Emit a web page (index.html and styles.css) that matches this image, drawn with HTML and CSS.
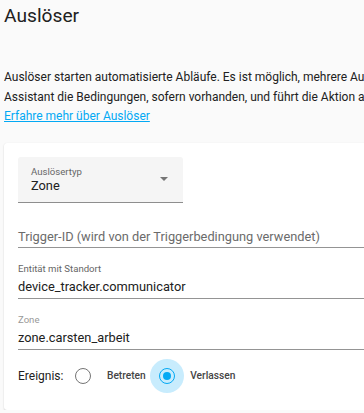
FILE: index.html
```html
<!DOCTYPE html>
<html lang="de">
<head>
  <meta charset="UTF-8">
  <meta name="viewport" content="width=device-width, initial-scale=1.0">
  <title>Auslöser</title>
  <link rel="stylesheet" href="styles.css">
</head>
<body>
  <div class="page">
    <h1 class="page-title">Auslöser</h1>
    <p class="intro">
      Auslöser starten automatisierte Abläufe. Es ist möglich, mehrere Auslöser für dieselbe Regel anzugeben. Sobald ein Auslöser startet, prüft Home<br>
      Assistant die Bedingungen, sofern vorhanden, und führt die Aktion aus.<br>
      <a href="#" class="intro-link">Erfahre mehr über Auslöser</a>
    </p>

    <div class="card">
      <div class="select">
        <div class="select-text">
          <div class="field-label">Auslösertyp</div>
          <div class="field-value">Zone</div>
        </div>
        <span class="select-arrow"></span>
      </div>

      <div class="field field-empty">
        <div class="field-placeholder">Trigger-ID (wird von der Triggerbedingung verwendet)</div>
      </div>

      <div class="field">
        <div class="field-label">Entität mit Standort</div>
        <div class="field-value">device_tracker.communicator</div>
      </div>

      <div class="field">
        <div class="field-label field-label-light">Zone</div>
        <div class="field-value">zone.carsten_arbeit</div>
      </div>

      <div class="event-row">
        <span class="event-label">Ereignis:</span>
        <label class="radio-option">
          <span class="radio"><span class="radio-ring"></span></span>
          <span class="radio-text">Betreten</span>
        </label>
        <label class="radio-option">
          <span class="radio checked"><span class="radio-ring"></span></span>
          <span class="radio-text">Verlassen</span>
        </label>
      </div>
    </div>
  </div>
</body>
</html>
```

FILE: styles.css
```css
:root {
  --primary: #03a9f4;
  --text: #212121;
  --secondary: #666666;
  --line: rgba(0, 0, 0, 0.42);
}

* {
  margin: 0;
  padding: 0;
  box-sizing: border-box;
}

body {
  font-family: Roboto, "Noto Sans", sans-serif;
  background-color: #fafafa;
  color: var(--text);
  overflow: hidden;
}

.page {
  width: 720px;
  padding-left: 4px;
}

.page-title {
  font-size: 19.2px;
  font-weight: 400;
  line-height: 24px;
  padding-top: 4px;
}

.intro {
  margin-top: 40px;
  font-size: 12px;
  line-height: 19.6px;
  white-space: nowrap;
}

.intro-link {
  color: var(--primary);
}

.card {
  margin-top: 16px;
  background: white;
  border-radius: 3px;
  box-shadow: 0 1px 2px rgba(0,0,0,0.14), 0 0 1px rgba(0,0,0,0.08);
  padding: 14px 0 17px 14px;
}

.select {
  width: 165px;
  height: 46px;
  display: flex;
  align-items: center;
  justify-content: space-between;
  background-color: #f5f5f5;
  border-radius: 3px 3px 0 0;
  border-bottom: 1px solid var(--line);
  padding: 0 15px 0 13px;
}

.select-text {
  padding-top: 1px;
}

.select-arrow {
  width: 0;
  height: 0;
  border-left: 4px solid transparent;
  border-right: 4px solid transparent;
  border-top: 4px solid #757575;
}

.field {
  padding: 15px 0 3px;
  border-bottom: 1px solid var(--line);
}

.field-empty {
  padding: 26px 0 2px;
}

.field-label {
  font-size: 9.6px;
  line-height: 12px;
  color: var(--secondary);
}

.field .field-label {
  margin-bottom: 4px;
}

.field-label-light {
  color: #999;
}

.field-value,
.field-placeholder {
  font-size: 12.8px;
  line-height: 16px;
}

.field-placeholder {
  color: #6b6b6b;
}

.event-row {
  display: flex;
  align-items: center;
  margin-top: 9px;
  height: 34px;
}

.event-label {
  font-size: 12px;
  line-height: 16px;
  margin-right: 3px;
}

.radio-option {
  display: flex;
  align-items: center;
  margin-right: 4px;
}

.radio {
  width: 34px;
  height: 34px;
  border-radius: 50%;
  display: flex;
  align-items: center;
  justify-content: center;
}

.radio-ring {
  width: 16px;
  height: 16px;
  border-radius: 50%;
  border: 1.6px solid #757575;
  display: flex;
  align-items: center;
  justify-content: center;
}

.radio.checked {
  background-color: rgba(3, 169, 244, 0.22);
}

.radio.checked .radio-ring {
  border-color: var(--primary);
}

.radio.checked .radio-ring::after {
  content: '';
  width: 8px;
  height: 8px;
  border-radius: 50%;
  background-color: var(--primary);
}

.radio-text {
  font-size: 10.2px;
  font-weight: 500;
  color: #444;
  margin-left: 6.5px;
}
```
